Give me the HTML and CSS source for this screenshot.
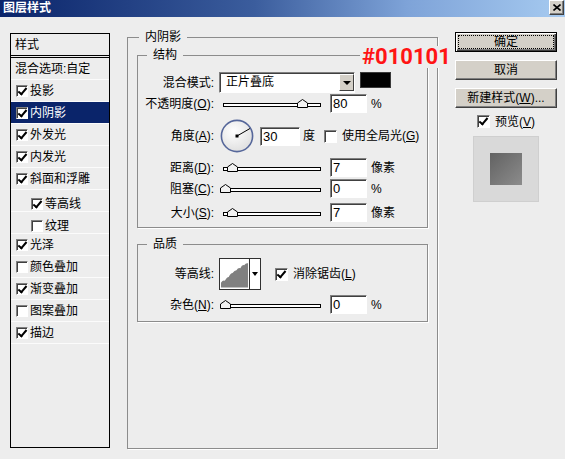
FILE: index.html
```html
<!DOCTYPE html>
<html lang="zh-CN">
<head>
  <meta charset="UTF-8">
  <title>图层样式</title>
  <link rel="stylesheet" href="styles.css">
</head>
<body>

  <div class="dialog">
    <div class="titlebar">
      <span class="title">图层样式</span>
      <span class="close">
        <svg width="8" height="7" viewBox="0 0 8 7"><path d="M0.5 0.5L7.5 6.5M7.5 0.5L0.5 6.5" stroke="#000" stroke-width="1.6"/></svg>
      </span>
    </div>

    <div class="body">
      <div class="list">
        <div class="list-head">样式</div>
        <div class="item plain">混合选项:自定</div>
        <div class="item"><span class="cb on"></span>投影</div>
        <div class="item sel"><span class="cb on"></span>内阴影</div>
        <div class="item"><span class="cb on"></span>外发光</div>
        <div class="item"><span class="cb on"></span>内发光</div>
        <div class="item"><span class="cb on"></span>斜面和浮雕</div>
        <div class="item sub"><span class="cb on"></span>等高线</div>
        <div class="item sub"><span class="cb"></span>纹理</div>
        <div class="item"><span class="cb on"></span>光泽</div>
        <div class="item"><span class="cb"></span>颜色叠加</div>
        <div class="item"><span class="cb on"></span>渐变叠加</div>
        <div class="item"><span class="cb"></span>图案叠加</div>
        <div class="item"><span class="cb on"></span>描边</div>
      </div>

      <fieldset class="group main">
        <legend>内阴影</legend>

        <fieldset class="group sub">
          <legend>结构</legend>

          <div class="row">
            <span class="lbl">混合模式:</span>
            <div class="select">
              <span class="select-val">正片叠底</span>
              <span class="select-btn"></span>
            </div>
            <span class="swatch"></span>
          </div>

          <div class="row">
            <span class="lbl">不透明度(<u>O</u>):</span>
            <div class="slider">
              <div class="track"></div>
              <svg class="thumb" style="left: 77px" width="11" height="9" viewBox="0 0 11 9"><path d="M0.5 8.5V4L5.5 0.5L10.5 4V8.5Z" fill="#f2f2f2" stroke="#000"/></svg>
            </div>
            <span class="num">80</span>
            <span class="unit">%</span>
          </div>

          <div class="row angle">
            <span class="lbl">角度(<u>A</u>):</span>
            <svg class="dial" width="34" height="34" viewBox="0 0 34 34">
              <defs>
                <radialGradient id="dialfill" cx="40%" cy="35%" r="70%">
                  <stop offset="0" stop-color="#ffffff"/>
                  <stop offset="1" stop-color="#dedede"/>
                </radialGradient>
              </defs>
              <circle cx="17" cy="17" r="15.6" fill="url(#dialfill)" stroke="#56679a" stroke-width="1.6"/>
              <line x1="17" y1="17" x2="30" y2="9.5" stroke="#000" stroke-width="1"/>
              <rect x="15.5" y="15.5" width="3" height="3" fill="#000"/>
            </svg>
            <span class="num wide">30</span>
            <span class="unit deg">度</span>
            <span class="cb big"></span>
            <span class="cb-text">使用全局光(<u>G</u>)</span>
          </div>

          <div class="row">
            <span class="lbl">距离(<u>D</u>):</span>
            <div class="slider">
              <div class="track"></div>
              <svg class="thumb" style="left: 7px" width="11" height="9" viewBox="0 0 11 9"><path d="M0.5 8.5V4L5.5 0.5L10.5 4V8.5Z" fill="#f2f2f2" stroke="#000"/></svg>
            </div>
            <span class="num">7</span>
            <span class="unit">像素</span>
          </div>

          <div class="row">
            <span class="lbl">阻塞(<u>C</u>):</span>
            <div class="slider">
              <div class="track"></div>
              <svg class="thumb" style="left: 0px" width="11" height="9" viewBox="0 0 11 9"><path d="M0.5 8.5V4L5.5 0.5L10.5 4V8.5Z" fill="#f2f2f2" stroke="#000"/></svg>
            </div>
            <span class="num">0</span>
            <span class="unit">%</span>
          </div>

          <div class="row last">
            <span class="lbl">大小(<u>S</u>):</span>
            <div class="slider">
              <div class="track"></div>
              <svg class="thumb" style="left: 7px" width="11" height="9" viewBox="0 0 11 9"><path d="M0.5 8.5V4L5.5 0.5L10.5 4V8.5Z" fill="#f2f2f2" stroke="#000"/></svg>
            </div>
            <span class="num">7</span>
            <span class="unit">像素</span>
          </div>
        </fieldset>

        <fieldset class="group quality">
          <legend>品质</legend>

          <div class="row contour-row">
            <span class="lbl">等高线:</span>
            <div class="contour">
              <svg class="curve" width="30" height="30" viewBox="-1 -1 30 30">
                <path d="M0 28V23Q2 20 4 21Q6 17 8 17Q10 13 12 13Q14 10 16 10Q18 7 20 8Q22 4 24 5Q26 2 28 3V28Z" fill="#808080"/>
              </svg>
              <span class="contour-btn"></span>
            </div>
            <span class="cb big on aa"></span>
            <span class="cb-text">消除锯齿(<u>L</u>)</span>
          </div>

          <div class="row noise">
            <span class="lbl">杂色(<u>N</u>):</span>
            <div class="slider">
              <div class="track"></div>
              <svg class="thumb" style="left: 0px" width="11" height="9" viewBox="0 0 11 9"><path d="M0.5 8.5V4L5.5 0.5L10.5 4V8.5Z" fill="#f2f2f2" stroke="#000"/></svg>
            </div>
            <span class="num">0</span>
            <span class="unit">%</span>
          </div>
        </fieldset>
      </fieldset>

      <div class="side">
        <div class="btn default"><span class="focus">确定</span></div>
        <div class="btn">取消</div>
        <div class="btn">新建样式(<u>W</u>)...</div>
        <div class="preview-row">
          <span class="cb big on"></span>
          <span class="cb-text">预览(<u>V</u>)</span>
        </div>
        <div class="preview">
          <div class="preview-square"></div>
        </div>
      </div>
    </div>

    <div class="note">#010101</div>
  </div>

</body>
</html>
```

FILE: styles.css
```css
* {
  box-sizing: border-box;
}
body {
  margin: 0;
  background: #ededed;
  font-family: "Liberation Sans", "Noto Sans CJK SC", sans-serif;
  font-size: 12px;
  color: #000;
}
u {
  text-decoration: underline;
}
.dialog {
  position: relative;
  width: 565px;
  height: 459px;
  background: #ededed;
  overflow: hidden;
}

/* title bar */
.titlebar {
  height: 17px;
  display: flex;
  justify-content: space-between;
  background: linear-gradient(to right, #0a246a, #3b5d9d 45%, #7ea3d8 72%, #a6caf0);
}
.title {
  margin-left: 3px;
  color: #fff;
  font-weight: bold;
  line-height: 17px;
}
.close {
  display: flex;
  align-items: center;
  justify-content: center;
  width: 15px;
  height: 15px;
  margin-right: 1px;
  background: #d4d0c8;
  border: 1px solid;
  border-color: #fff #404040 #404040 #fff;
  box-shadow: inset -1px -1px #808080;
}

.body {
  display: flex;
  align-items: flex-start;
  padding-left: 10px;
}

/* left list */
.list {
  width: 100px;
  height: 415px;
  margin-top: 16px;
  border: 1px solid #000;
  line-height: 14px;
}
.list-head {
  height: 24px;
  padding: 4px 0 0 4px;
  border-bottom: 3px double #000;
}
.item {
  display: flex;
  align-items: center;
  height: 22px;
  padding-left: 5px;
  border-bottom: 1px solid #fbfbfb;
  white-space: nowrap;
}
.item .cb {
  margin-right: 2px;
}
.item.plain {
  padding-left: 4px;
}
.item.sub {
  padding-left: 20px;
}
.item.sel {
  background: #0a246a;
  color: #fff;
}

/* checkbox */
.cb {
  position: relative;
  flex: none;
  width: 12px;
  height: 12px;
  background: #fff;
  border: 1px solid;
  border-color: #808080 #fff #fff #808080;
  box-shadow: inset 1px 1px #404040;
}
.cb.big {
  width: 13px;
  height: 13px;
}
.cb.on::after {
  content: "";
  position: absolute;
  left: 3px;
  top: 0;
  width: 3px;
  height: 7px;
  border: solid #000;
  border-width: 0 2px 2px 0;
  transform: rotate(40deg);
}

/* group boxes */
.group {
  margin: 0;
  min-width: 0;
  border: 1px solid #8c8c8c;
  box-shadow: 1px 1px 0 #fff;
}
.group > legend {
  padding: 0 6px;
  line-height: 14px;
}
.main {
  width: 311px;
  height: 419px;
  margin: 13px 0 0 17px;
  padding: 4px 9px 0;
}
.main > legend {
  margin-left: 2px;
}
.sub,
.quality {
  padding: 10px 0 4px;
}
.sub > legend,
.quality > legend {
  margin-left: 9px;
}
.quality {
  margin-top: 9px;
  padding: 7px 0 6px;
}

/* rows */
.row {
  display: flex;
  align-items: center;
  height: 21px;
  line-height: 14px;
  white-space: nowrap;
}
.row.angle {
  height: 34px;
  margin: 5px 0 4px;
}
.row.last {
  margin-top: 3px;
}
.row.contour-row {
  height: 32px;
}
.row.noise {
  margin-top: 4px;
}
.lbl {
  flex: none;
  width: 76px;
  text-align: right;
}

/* blend mode select */
.select {
  display: flex;
  width: 136px;
  height: 21px;
  margin-left: 5px;
  padding: 1px 0 1px 1px;
  align-self: flex-start;
  background: #fff;
  border: 1px solid;
  border-color: #808080 #fff #fff #808080;
  box-shadow: inset 1px 1px #404040;
}
.select-val {
  flex: 1;
  padding-left: 5px;
  line-height: 17px;
}
.select-btn {
  display: flex;
  align-items: center;
  justify-content: center;
  width: 15px;
  background: #d4d0c8;
  border: 1px solid;
  border-color: #fff #404040 #404040 #fff;
}
.select-btn::after {
  content: "";
  border-left: 4px solid transparent;
  border-right: 4px solid transparent;
  border-top: 4px solid #000;
}
.swatch {
  align-self: flex-start;
  width: 31px;
  height: 16px;
  margin-left: 5px;
  background: #010101;
  border: 1px solid #3a3a3a;
}

/* sliders */
.slider {
  position: relative;
  flex: none;
  width: 104px;
  height: 21px;
  margin-left: 6px;
  padding: 10px 3px 0;
}
.track {
  height: 4px;
  background: #fff;
  border: 1px solid #000;
}
.thumb {
  position: absolute;
  top: 6px;
}

/* number fields */
.num {
  flex: none;
  width: 37px;
  height: 19px;
  margin-left: 6px;
  padding-left: 2px;
  background: #fff;
  border: 1px solid;
  border-color: #808080 #fff #fff #808080;
  box-shadow: inset 1px 1px #404040;
  font-size: 13px;
  line-height: 17px;
}
.num.wide {
  width: 40px;
}
.unit {
  margin-left: 4px;
}
.unit.deg {
  margin-left: 3px;
}
.angle .cb {
  margin-left: 9px;
}
.cb-text {
  margin-left: 5px;
}
.dial {
  flex: none;
  margin-left: 6px;
}

/* contour picker */
.contour {
  display: flex;
  width: 42px;
  height: 32px;
  margin-left: 5px;
  background: #fff;
  border: 1px solid #303030;
}
.curve {
  border-right: 1px solid #303030;
}
.contour-btn {
  flex: 1;
  display: flex;
  align-items: center;
  justify-content: center;
}
.contour-btn::after {
  content: "";
  border-left: 3px solid transparent;
  border-right: 3px solid transparent;
  border-top: 4px solid #000;
}
.cb.aa {
  margin-left: 14px;
}

/* right column */
.side {
  display: flex;
  flex-direction: column;
  align-items: center;
  width: 102px;
  margin: 15px 0 0 17px;
}
.btn {
  display: flex;
  align-items: center;
  justify-content: center;
  width: 102px;
  height: 20px;
  margin-bottom: 8px;
  background: #d4d0c8;
  border: 1px solid;
  border-color: #fff #404040 #404040 #fff;
  box-shadow: inset -1px -1px #808080;
  line-height: 14px;
}
.btn.default {
  padding: 2px;
  border-color: #000;
  box-shadow: inset 1px 1px #fff, inset -1px -1px #404040, inset -2px -2px #808080;
}
.focus {
  display: flex;
  align-items: center;
  justify-content: center;
  width: 100%;
  height: 100%;
  border: 1px dotted #000;
}
.preview-row {
  display: flex;
  align-items: center;
  height: 13px;
  margin-top: -1px;
  line-height: 14px;
}
.preview {
  width: 66px;
  height: 66px;
  margin-top: 8px;
  padding: 16px;
  background: #d9d9d9;
  border: 1px solid #cfcfcf;
}
.preview-square {
  width: 32px;
  height: 32px;
  background: linear-gradient(135deg, #626262, #8c8c8c);
}

/* colour annotation laid over the dialog */
.note {
  position: absolute;
  left: 360px;
  top: 46px;
  padding: 0 2px;
  background: #ededed;
  color: #ff1414;
  font-family: Roboto, "Liberation Sans", sans-serif;
  font-weight: bold;
  font-size: 22px;
  line-height: 22px;
}
```
